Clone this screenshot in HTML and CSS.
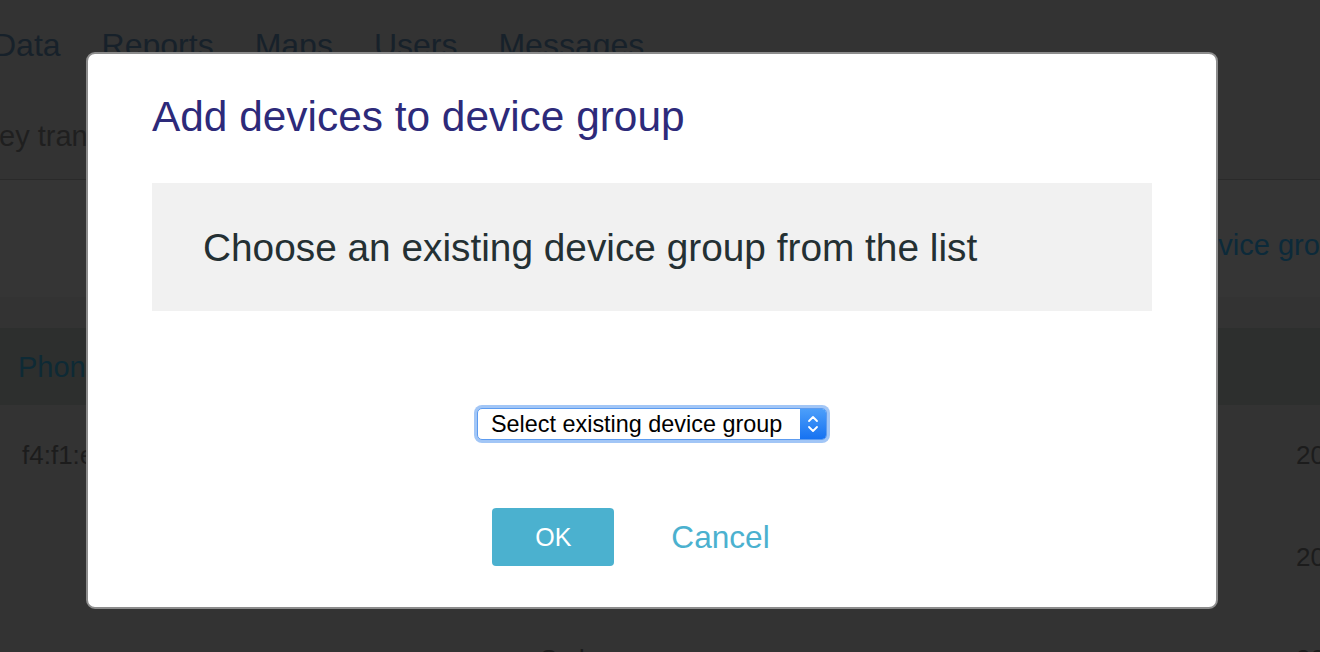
FILE: index.html
```html
<!DOCTYPE html>
<html lang="en">
<head>
<meta charset="utf-8">
<title>Add devices to device group</title>
<link rel="stylesheet" href="styles.css">
</head>
<body>
<div class="page">
  <header class="header">
    <nav class="nav">
      <span>Data</span><span>Reports</span><span>Maps</span><span>Users</span><span>Messages</span>
    </nav>
    <p class="subtitle">ey transmissions</p>
  </header>
  <div class="toolbar">
    <span class="tool-link">device group</span>
  </div>
  <div class="spacer"></div>
  <div class="thead"><span>Phone</span></div>
  <div class="row"><span>f4:f1:e1:72:b0:3c</span><span></span><span>2019-03-02</span></div>
  <div class="row"><span></span><span></span><span>2019-03-02</span></div>
  <div class="row"><span></span><span>Sydney</span><span>2019-03-02</span></div>
</div>

<div class="overlay">
  <div class="modal">
    <h2 class="modal-title">Add devices to device group</h2>
    <div class="modal-info">Choose an existing device group from the list</div>
    <div class="select-row">
      <div class="select">
        <span class="select-text">Select existing device group</span>
        <span class="select-arrow">
          <svg width="12" height="22" viewBox="0 0 12 22"><polyline points="2,8 6,4 10,8" fill="none" stroke="#fff" stroke-width="1.8" stroke-linecap="round" stroke-linejoin="round"/><polyline points="2,14 6,18 10,14" fill="none" stroke="#fff" stroke-width="1.8" stroke-linecap="round" stroke-linejoin="round"/></svg>
        </span>
      </div>
    </div>
    <div class="modal-footer">
      <button class="btn-ok">OK</button>
      <span class="btn-cancel">Cancel</span>
    </div>
  </div>
</div>
</body>
</html>
```

FILE: styles.css
```css
html, body {
  margin: 0;
  padding: 0;
}
body {
  background: #333333;
  font-family: "Liberation Sans", Arial, sans-serif;
  width: 1320px;
  height: 652px;
  overflow: hidden;
}
.page {
  width: 1320px;
}
.header {
  height: 179px;
  border-bottom: 1px solid #2a2a2a;
  box-sizing: content-box;
  overflow: hidden;
}
.nav {
  display: flex;
  gap: 41px;
  margin-left: -7px;
  padding-top: 27px;
  font-size: 32px;
  line-height: 36px;
  color: #17212a;
  white-space: nowrap;
}
.subtitle {
  margin: 56px 0 0 -1px;
  font-size: 29px;
  line-height: 34px;
  color: #1f1f1f;
  white-space: nowrap;
}
.toolbar {
  height: 117px;
  background: #353535;
  box-sizing: border-box;
  padding: 48px 0 0 1186px;
  white-space: nowrap;
  overflow: hidden;
}
.tool-link {
  font-size: 29px;
  line-height: 34px;
  color: #0c2a3a;
}
.spacer {
  height: 31px;
  background: #333333;
}
.thead {
  height: 77px;
  box-sizing: border-box;
  padding: 22px 0 0 18px;
  background: #2d2f2e;
  font-size: 29px;
  line-height: 34px;
  color: #0e2a35;
}
.row {
  display: grid;
  grid-template-columns: 518px 756px 1fr;
  height: 102px;
  box-sizing: border-box;
  padding: 35px 0 0 22px;
  font-size: 26px;
  line-height: 30px;
  color: #1c1c1c;
  white-space: nowrap;
}

.overlay {
  position: fixed;
  inset: 0;
  padding: 52px 0 0 86px;
}
.modal {
  width: 1132px;
  box-sizing: border-box;
  background: #ffffff;
  border: 2px solid #8c8c8c;
  border-radius: 9px;
  padding: 40px 64px 41px;
}
.modal-title {
  margin: 0;
  font-weight: normal;
  font-size: 42.4px;
  line-height: 46px;
  color: #2d2a7a;
}
.modal-info {
  margin-top: 43px;
  background: #f1f1f1;
  padding: 41px 51px 39px;
  font-size: 38.8px;
  line-height: 48px;
  color: #243033;
  white-space: nowrap;
}
.select-row {
  margin-top: 97px;
  display: flex;
  justify-content: center;
}
.select {
  display: flex;
  width: 350px;
  height: 32px;
  box-sizing: border-box;
  border: 1px solid #5d9cf0;
  border-radius: 5px;
  box-shadow: 0 0 0 3px #a2c6f6;
  background: #ffffff;
}
.select-text {
  flex: 1;
  padding-left: 13px;
  font-size: 23.4px;
  line-height: 30px;
  color: #000000;
  white-space: nowrap;
}
.select-arrow {
  width: 26px;
  display: flex;
  align-items: center;
  justify-content: center;
  background: linear-gradient(#4c9ffa, #1672f1);
  border-radius: 0 4px 4px 0;
}
.select-arrow svg {
  display: block;
}
.modal-footer {
  margin-top: 68px;
  display: flex;
  justify-content: center;
  align-items: center;
  gap: 57px;
  padding-right: 42px;
}
.btn-ok {
  width: 122px;
  height: 58px;
  border: none;
  border-radius: 4px;
  background: #4bb1cf;
  color: #ffffff;
  font-family: "Liberation Sans", Arial, sans-serif;
  font-size: 25px;
  padding: 0;
}
.btn-cancel {
  font-size: 31.6px;
  line-height: 36px;
  color: #4bb1cf;
}
```
